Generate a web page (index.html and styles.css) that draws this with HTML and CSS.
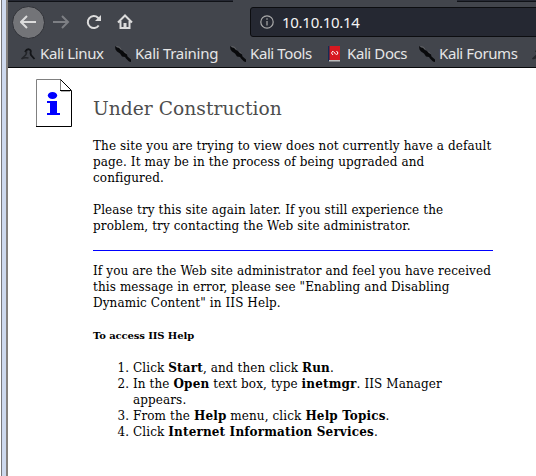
FILE: index.html
```html
<!DOCTYPE html>
<html lang="en">
<head>
<meta charset="utf-8">
<title>Under Construction</title>
<link rel="stylesheet" href="styles.css">
</head>
<body>
<svg class="symbols" aria-hidden="true">
  <symbol id="tool" viewBox="0 0 16 16">
    <path d="M0 0l2 1.500 2 .5 2 2 2 1 2 2 2 1.500 .5 2 3.500 3V16l-2-.5-3-3-1-1.500-3-.5-2-3-3-2-1.500-2z" fill="#090a0c"/>
    <path d="M1.500.500l3 .7 1.500 2.300M9 5.500l2 2" stroke="#777" stroke-width=".6" fill="none"/>
  </symbol>
  <symbol id="dragon" viewBox="0 0 16 16">
    <path d="M5 6Q7 2.500 9.500 3.500q2 1 1 3.500l.5 2L14.500 13" stroke="#131518" stroke-width="1.800" fill="none"/>
    <path d="M6.500 5Q7 8.500 4 10.500L1.500 13q3-2 7-1" stroke="#24262a" stroke-width="1.500" fill="none"/>
  </symbol>
</svg>
<div class="window">
  <div class="edge"></div>
  <div class="browser">
    <div class="tabs"><span class="tab-left"></span><span class="tab-active"></span><span class="tab-right"></span></div>
    <nav class="toolbar">
      <span class="back"><svg width="18" height="18" viewBox="0 0 18 18"><path d="M16 9H1M7 3L1 9l6 6"/></svg></span>
      <svg class="forward" width="18" height="18" viewBox="0 0 18 18"><path d="M0 9h15M9 3l6 6-6 6"/></svg>
      <svg class="reload" width="18" height="18" viewBox="0 0 18 18"><path d="M13.700 12.500A6 6 0 1 1 13 4.700L15 7"/><path class="solid" d="M16 2v6h-6z"/></svg>
      <svg class="home" width="18" height="18" viewBox="0 0 18 18"><path d="M1 9.500L8 2.500l7 7M3.500 8v7h9V8"/><path class="solid" d="M6.500 10h3v5h-3z"/></svg>
      <div class="address"><svg width="14" height="14" viewBox="0 0 14 14"><circle cx="7" cy="7" r="6.200"/><path d="M7 6v4.500M7 3.300v1.500"/></svg><span>10.10.10.14</span></div>
    </nav>
    <nav class="bookmarks">
      <a class="linux"><svg class="icon"><use href="#dragon"/></svg><span>Kali Linux</span></a>
      <a class="training"><svg class="icon"><use href="#tool"/></svg><span>Kali Training</span></a>
      <a class="tools"><svg class="icon"><use href="#tool"/></svg><span>Kali Tools</span></a>
      <a class="docs"><svg class="icon" viewBox="0 0 16 16"><path d="M1 0h2v15H1z" fill="#142c55"/><path d="M2.500 0H13v14H2.500z" fill="#d71920"/><path d="M2 14h11v1.500H2z" fill="#bbb"/><path d="M6 5L4.500 7 6 9M9.500 5L11 7 9.500 9M6.500 5.500l2.500 3" stroke="#fff" fill="none"/></svg><span>Kali Docs</span></a>
      <a class="forums"><svg class="icon"><use href="#tool"/></svg><span>Kali Forums</span></a>
      <a class="more"><svg class="icon"><use href="#dragon"/></svg></a>
    </nav>
    <main>
      <svg class="page-icon" width="36" height="48" viewBox="0 0 36 48">
        <path d="M0 0h25l10 11v36H0z" fill="#fff"/><path d="M.5 47V.5H25M24.500.500v11" stroke="#808080" fill="none"/><path d="M25 12.500h9" stroke="#b0b0b0" fill="none"/><path d="M24.500.500l11 11V47.500H0M24 11.500h11" stroke="#000" fill="none"/>
        <ellipse cx="16.500" cy="16.500" rx="4.700" ry="3.500" fill="#00f"/><path d="M11 22h10v12h3v2H11v-2h3V24h-3z" fill="#00f"/>
      </svg>
      <article>
        <h1>Under Construction</h1>
        <p>The site you are trying to view does not currently have a default<br>page. It may be in the process of being upgraded and<br>configured.</p>
        <p>Please try this site again later. If you still experience the<br>problem, try contacting the Web site administrator.</p>
        <hr>
        <p>If you are the Web site administrator and feel you have received<br>this message in error, please see "Enabling and Disabling<br>Dynamic Content" in IIS Help.</p>
        <h2>To access IIS Help</h2>
        <ol>
          <li>Click <b>Start</b>, and then click <b>Run</b>.</li>
          <li>In the <b>Open</b> text box, type <b>inetmgr</b>. IIS Manager<br>appears.</li>
          <li>From the <b>Help</b> menu, click <b>Help Topics</b>.</li>
          <li>Click <b>Internet Information Services</b>.</li>
        </ol>
      </article>
    </main>
  </div>
</div>
</body>
</html>
```
FILE: styles.css
```css
* { box-sizing: border-box; }
body { margin: 0; overflow: hidden; background: #fff; }
.symbols { display: none; }
.window { display: flex; width: 536px; height: 476px; }
.edge { width: 8px; flex: none; background: linear-gradient(90deg, #fff 0 1px, #77777b 1px 2px, #ced9ee 2px 6px, #85817e 6px 8px); }
.browser { flex: 1; min-width: 0; }
.tabs { display: flex; height: 2px; background: #42454c; }
.tab-left { width: 225px; background: #252832; border-bottom: 1px solid #101217; }
.tab-active { width: 224px; }
.tab-right { flex: 1; background: #252832; border-bottom: 1px solid #101217; }
.toolbar { display: flex; height: 40px; background: #42454c; align-items: center; overflow: hidden; }
.toolbar svg { fill: none; stroke: #dcdcdc; stroke-width: 2; flex: none; }
.toolbar .solid { fill: #dcdcdc; stroke: none; }
.back { display: grid; place-items: center; flex: none; width: 33px; height: 33px; margin-left: 4px; border: 1px solid #303238; border-radius: 50%; background: #737478; }
.toolbar .forward { margin-left: 8px; stroke: #7d7f84; }
.reload { margin-left: 14px; }
.home { margin-left: 14px; }
.address { display: flex; align-items: center; width: 310px; height: 30px; margin-left: 115px; flex: none; padding-left: 9px; border: 1px solid #0c0d10; border-radius: 3px; background: #252832; color: #f4f4f4; font: 15px/28px "Noto Sans", sans-serif; letter-spacing: -.28px; }
.toolbar .address svg { stroke: #aaa; stroke-width: 1.2; margin-right: 8px; }
.bookmarks { display: flex; overflow: hidden; height: 26px; background: #42454c; border-bottom: 1px solid #08090b; color: #e6e6e6; font: 15px/23px "Noto Sans", sans-serif; letter-spacing: -.4px; }
.bookmarks a { display: flex; align-items: center; height: 24px; flex: none; white-space: nowrap; }
.bookmarks span { position: relative; top: -1px; }
.icon { width: 16px; height: 16px; flex: none; margin-right: 4px; }
.linux { width: 95px; margin-left: 12px; }
.training { width: 115px; letter-spacing: -.28px; }
.tools { width: 97px; }
.docs { width: 92px; }
.forums { width: 112px; }
main { display: flex; align-items: flex-start; padding: 11px 0 0 28px; color: #000; }
.page-icon { flex: none; }
article { width: 400px; margin-left: 21px; padding-top: 19px; font: 13.333px/16px "DejaVu Serif Condensed", "DejaVu Serif", serif; font-stretch: condensed; letter-spacing: .11px; white-space: nowrap; }
h1 { margin: 0 0 18px; color: #4d4d4d; font: 18.667px/22px "DejaVu Serif", serif; letter-spacing: .03px; }
p { margin: 0 0 16px; }
hr { height: 1px; margin: 0 0 12px; border: 0; background: #00f; }
h2 { margin: 18px 0 17px; font: bold 10px/14px "DejaVu Serif", serif; letter-spacing: -.1px; }
ol { margin: 0; padding-left: 40px; }
b { line-height: 0; letter-spacing: .16px; }
```
